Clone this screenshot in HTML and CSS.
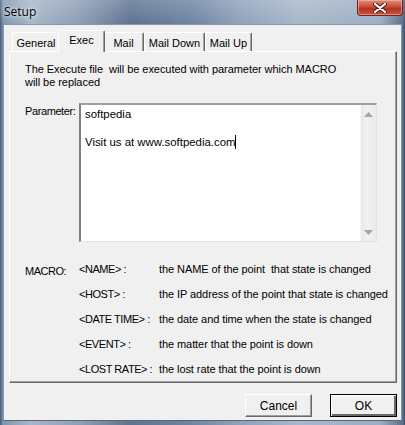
FILE: index.html
```html
<!DOCTYPE html>
<html lang="en">
<head>
  <meta charset="UTF-8">
  <title>Setup</title>
  <link rel="stylesheet" href="styles.css">
</head>
<body>
  <div class="window">
    <div class="titlebar">
      <span class="title">Setup</span>
      <div class="close-btn" title="Close">
        <svg width="14" height="10" viewBox="0 0 14 10">
          <path d="M2 1 L12 9 M12 1 L2 9" stroke="#4a1a14" stroke-width="4" stroke-linecap="round"/>
          <path d="M2 1 L12 9 M12 1 L2 9" stroke="#fff" stroke-width="2.2" stroke-linecap="round"/>
        </svg>
      </div>
    </div>
    <div class="client">
      <div class="tabs">
        <div class="tab tab-general">General</div>
        <div class="tab tab-exec active">Exec</div>
        <div class="tab tab-mail">Mail</div>
        <div class="tab tab-maildown">Mail Down</div>
        <div class="tab tab-mailup">Mail Up</div>
      </div>
      <div class="panel">
        <p class="intro">The Execute file&nbsp; will be executed with parameter which MACRO<br>will be replaced</p>
        <div class="param-row">
          <span class="param-label">Parameter:</span>
          <div class="edit">
            <div class="edit-text">softpedia<br><br>Visit us at www.softpedia.com<span class="caret"></span></div>
            <div class="vscroll">
              <svg width="9" height="5" viewBox="0 0 9 5"><path d="M0 5 L4.5 0 L9 5 Z" fill="#a4a4a4"/></svg>
              <svg width="9" height="5" viewBox="0 0 9 5"><path d="M0 0 L4.5 5 L9 0 Z" fill="#a4a4a4"/></svg>
            </div>
          </div>
        </div>
        <div class="macros">
          <div class="macro-label">MACRO:</div>
          <div class="macro-list">
            <span class="macro-name">&lt;NAME&gt; :</span><span>the NAME of the point&nbsp; that state is changed</span>
            <span class="macro-name">&lt;HOST&gt; :</span><span>the IP address of the point that state is changed</span>
            <span class="macro-name">&lt;DATE TIME&gt; :</span><span>the date and time when the state is changed</span>
            <span class="macro-name">&lt;EVENT&gt; :</span><span>the matter that the point is down</span>
            <span class="macro-name">&lt;LOST RATE&gt; :</span><span>the lost rate that the point is down</span>
          </div>
        </div>
      </div>
      <div class="buttons">
        <div class="btn">Cancel</div>
        <div class="btn default">OK</div>
      </div>
    </div>
  </div>
</body>
</html>
```

FILE: styles.css
```css
html, body {
  margin: 0;
  padding: 0;
  width: 405px;
  height: 425px;
  overflow: hidden;
}
body {
  font-family: 'Liberation Sans', Arial, sans-serif;
  font-size: 11px;
  color: #000;
}
.window {
  width: 405px;
  height: 425px;
  display: flex;
  flex-direction: column;
  background: linear-gradient(90deg, #44597a 0px, #8194ae 3px, #a7b6c9 30px, #8d9db4 80px, #5f7392 130px, #6d83a2 190px, #8fa2bb 240px, #a8b7ca 300px, #9dadc2 380px, #5b6f8e 403px, #3b4a63 405px);
  box-sizing: border-box;
}
.titlebar {
  height: 24px;
  display: flex;
  align-items: flex-start;
  justify-content: space-between;
  background: linear-gradient(180deg, rgba(255,255,255,0.18) 0%, rgba(255,255,255,0) 100%);
}
.title {
  font-family: 'Open Sans', 'Noto Sans', sans-serif;
  font-size: 12px;
  padding: 3px 0 0 4px;
  color: #000;
  text-shadow: 0 0 6px #dfe6ef, 0 0 3px #e8eef5;
}
.close-btn {
  width: 46px;
  height: 16px;
  margin-right: 2px;
  display: flex;
  align-items: center;
  justify-content: center;
  background: linear-gradient(180deg, #e08b78 0%, #c9503c 45%, #b5321f 55%, #c9513c 100%);
  border: 1px solid #6b2519;
  border-top: none;
  border-radius: 0 0 4px 4px;
  box-sizing: border-box;
  box-shadow: inset 0 0 0 1px rgba(255,200,190,0.5);
}
.client {
  flex: 1;
  margin: 0 3px 4px 3px;
  background: #f0f0f0;
  border: 1px solid #8796aa;
  border-bottom-color: #5a6678;
  box-sizing: border-box;
  display: flex;
  flex-direction: column;
  padding: 5px 4px 3px 5px;
}
.tabs {
  height: 21px;
  display: flex;
  align-items: flex-end;
  padding-left: 3px;
  position: relative;
  z-index: 1;
}
.tab {
  height: 19px;
  box-sizing: border-box;
  border-top: 1px solid #fff;
  border-left: 1px solid #fff;
  border-right: 1px solid #696969;
  box-shadow: inset -1px 0 0 #a0a0a0;
  border-radius: 2px 2px 0 0;
  display: flex;
  align-items: center;
  justify-content: center;
  padding-top: 1px;
  background: #f0f0f0;
}
.tab-general { width: 48px; }
.tab-exec { width: 43px; }
.tab-mail { width: 41px; }
.tab-maildown { width: 61px; }
.tab-mailup { width: 47px; }
.tab.active {
  height: 22px;
  width: 47px;
  margin: 0 -2px -1px -2px;
  padding-bottom: 4px;
  position: relative;
  z-index: 2;
}
.panel {
  height: 332px;
  box-sizing: border-box;
  border-top: 1px solid #fff;
  border-left: 1px solid #fff;
  border-right: 1px solid #696969;
  border-bottom: 1px solid #696969;
  box-shadow: inset -1px -1px 0 #a0a0a0;
  padding: 11px 0 0 15px;
}
.intro {
  margin: 0;
  line-height: 13px;
  letter-spacing: -0.05px;
}
.param-row {
  display: flex;
  margin-top: 14px;
}
.param-label {
  width: 54px;
  padding-top: 2px;
  line-height: 13px;
  letter-spacing: -0.4px;
}
.edit {
  width: 298px;
  height: 139px;
  box-sizing: border-box;
  background: #fff;
  border-top: 2px solid #a0a0a0;
  border-left: 2px solid #808080;
  border-right: 1px solid #e3e3e3;
  border-bottom: 1px solid #e3e3e3;
  display: flex;
}
.edit-text {
  flex: 1;
  padding: 2px 0 0 4px;
  font-size: 11.4px;
  line-height: 14px;
}
.caret {
  display: inline-block;
  width: 1px;
  height: 14px;
  background: #000;
  vertical-align: -3px;
}
.vscroll {
  width: 16px;
  background: linear-gradient(90deg, #e8e8e8, #f1f1f1 40%, #ebebeb);
  border-left: 1px solid #f6f6f6;
  display: flex;
  flex-direction: column;
  justify-content: space-between;
  align-items: center;
  padding: 7px 0 6px 0;
  box-sizing: border-box;
}
.macros {
  display: flex;
  margin-top: 14px;
}
.macro-label {
  width: 54px;
  padding-top: 9px;
  letter-spacing: -0.5px;
}
.macro-list {
  display: grid;
  grid-template-columns: 80px auto;
  grid-auto-rows: 25px;
  align-items: center;
  letter-spacing: -0.08px;
}
.macro-name {
  letter-spacing: -0.45px;
}
.buttons {
  display: flex;
  justify-content: flex-end;
  gap: 18px;
  margin-top: 11px;
}
.btn {
  width: 67px;
  height: 23px;
  box-sizing: border-box;
  background: #f0f0f0;
  border-top: 1px solid #fff;
  border-left: 1px solid #fff;
  border-right: 1px solid #696969;
  border-bottom: 1px solid #696969;
  box-shadow: inset -1px -1px 0 #a0a0a0;
  display: flex;
  align-items: center;
  justify-content: center;
  font-size: 12px;
}
.btn.default {
  border: 1px solid #000;
  box-shadow: inset 1px 1px 0 #fff, inset -2px -2px 0 #696969;
}
```
